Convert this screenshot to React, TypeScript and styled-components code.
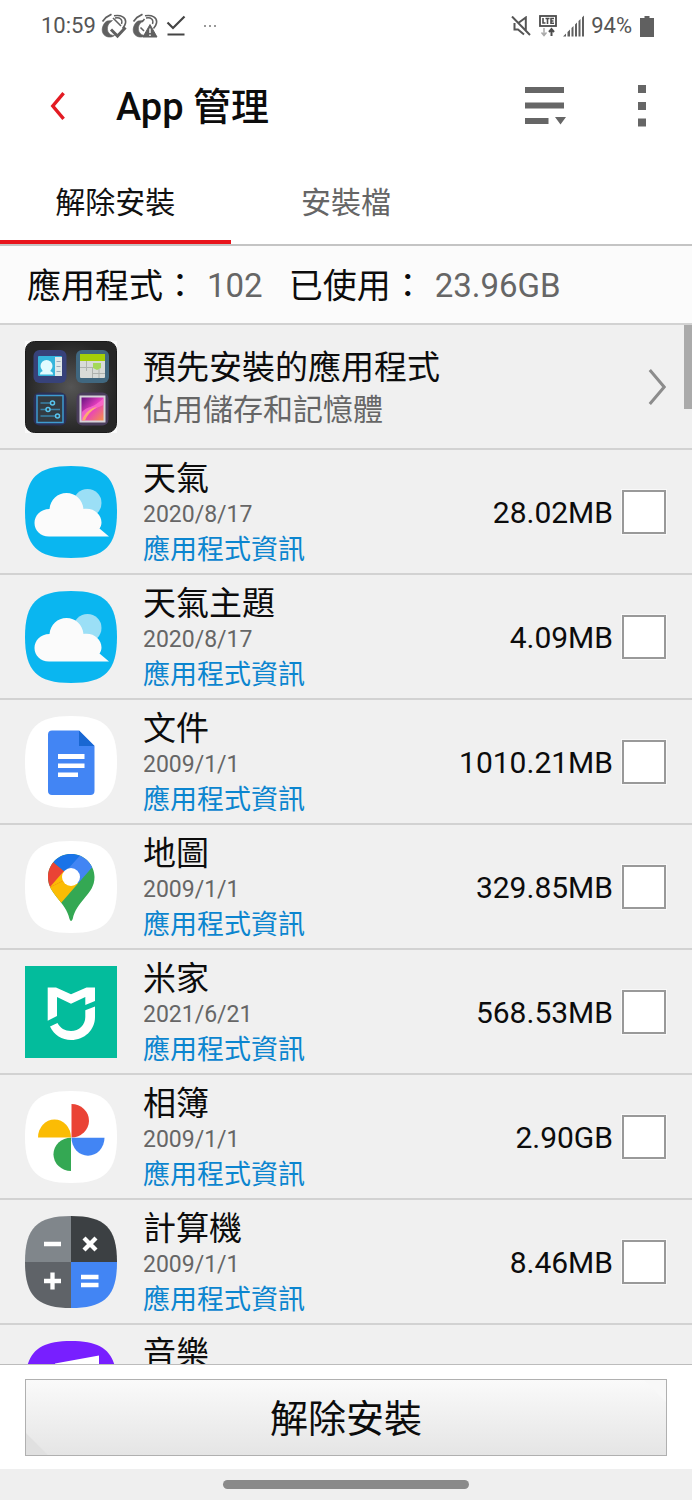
import React from "react";
import styled, { createGlobalStyle } from "styled-components";

const GlobalStyle = createGlobalStyle`
  *, *::before, *::after { box-sizing: border-box; }
  body {
    margin: 0;
    background: #fff;
    color: #0c0c0c;
    font-family: Roboto, "Noto Sans CJK TC", sans-serif;
  }
  button { font-family: inherit; color: inherit; cursor: pointer; }
  h1, h2, p, ul { margin: 0; padding: 0; }
  svg { display: block; flex: none; }
`;

const Screen = styled.div`
  display: flex;
  flex-direction: column;
  height: 100vh;
  overflow: hidden;
`;

const StatusBar = styled.div`
  flex: none;
  display: flex;
  align-items: center;
  justify-content: space-between;
  height: 52px;
  padding: 0 38px 0 41px;
  color: #555;
  font-size: 22px;
  line-height: 28px;
`;

const StatusGroup = styled.div<{ $gap: number }>`
  display: flex;
  align-items: center;
  gap: ${(p) => p.$gap}px;
`;

const Header = styled.header`
  flex: none;
  display: flex;
  align-items: center;
  height: 108px;
  padding: 0 30px 0 38px;
`;

const IconButton = styled.button`
  display: flex;
  align-items: center;
  justify-content: center;
  width: 40px;
  height: 56px;
  padding: 0;
  border: 0;
  background: none;
`;

const Title = styled.h1`
  flex: 1;
  padding: 2px 0 0 38px;
  font-size: 38px;
  font-weight: 500;
  line-height: 48px;
`;

const Actions = styled.div`
  display: flex;
  align-items: center;
  gap: 56px;
`;

const Tabs = styled.div`
  flex: none;
  display: grid;
  grid-template-columns: repeat(3, 1fr);
  height: 86px;
  border-bottom: 2px solid #c4c4c4;
`;

const Tab = styled.button<{ $active?: boolean }>`
  padding: 6px 0 0;
  border: 0;
  border-bottom: 4px solid ${(p) => (p.$active ? "#e8141c" : "transparent")};
  background: none;
  color: ${(p) => (p.$active ? "#111" : "#666")};
  font-size: 30px;
  line-height: 40px;
`;

const Summary = styled.div`
  flex: none;
  display: flex;
  align-items: center;
  gap: 26px;
  height: 79px;
  padding: 2px 27px 0;
  border-bottom: 2px solid #d2d2d2;
  background: #fbfbfb;
`;

const SummaryItem = styled.p`
  display: flex;
  gap: 10px;
  font-size: 34px;
  line-height: 44px;
`;

const SummaryValue = styled.span`
  color: #666;
  font-size: 33px;
`;

const ListArea = styled.main`
  position: relative;
  flex: 1;
  min-height: 0;
  background: #f0f0f0;
`;

const AppList = styled.ul`
  height: 100%;
  overflow-y: auto;
  scrollbar-width: none;
  list-style: none;
`;

const ScrollThumb = styled.div`
  position: absolute;
  top: 0;
  right: 0;
  width: 8px;
  height: 84px;
  background: #aaa;
`;

const Row = styled.li`
  display: flex;
  align-items: center;
  height: 125px;
  padding: 0 26px 0 25px;
  border-bottom: 2px solid #d2d2d2;
`;

const RowText = styled.div<{ $top?: boolean }>`
  flex: 1;
  min-width: 0;
  align-self: ${(p) => (p.$top ? "flex-start" : "center")};
  padding: ${(p) => (p.$top ? "8px" : "4px")} 0 0 26px;
`;

const AppName = styled.h2`
  font-size: 33px;
  font-weight: 400;
  line-height: 42px;
`;

const AppNote = styled.p`
  color: #666;
  font-size: 30px;
  line-height: 42px;
`;

const AppDate = styled.p`
  color: #666;
  font-size: 23px;
  line-height: 30px;
`;

const InfoLink = styled.a`
  display: block;
  width: max-content;
  color: #0b85cf;
  font-size: 27px;
  line-height: 40px;
  text-decoration: none;
`;

const SizeLabel = styled.label`
  display: flex;
  align-items: center;
  gap: 9px;
`;

const SizeText = styled.span`
  padding-top: 2px;
  font-size: 30px;
  line-height: 40px;
`;

const Check = styled.input`
  appearance: none;
  flex: none;
  width: 44px;
  height: 44px;
  margin: 0;
  border: 2px solid #999;
  outline: 1px solid #f9f9f9;
  background: #fff;
  &:checked { background: #e8141c; }
`;

const Footer = styled.footer`
  flex: none;
  padding: 14px 25px 13px;
  border-top: 1px solid #bcbcbc;
  background: #fff;
`;

const PrimaryButton = styled.button`
  display: block;
  width: 100%;
  height: 77px;
  padding: 2px 0 0;
  border: 1px solid #b0b0b0;
  background:
    linear-gradient(45deg, #e0e0e0 0 15px, transparent 16px),
    linear-gradient(225deg, #f8f8f8 0 15px, transparent 16px),
    linear-gradient(#fafafa, #e5e5e5);
  font-size: 38px;
  line-height: 48px;
`;

const GestureBar = styled.div`
  flex: none;
  display: flex;
  align-items: center;
  justify-content: center;
  height: 31px;
  background: #efefef;
`;

const GesturePill = styled.span`
  width: 246px;
  height: 9px;
  border-radius: 5px;
  background: #8a8a8a;
`;

const SQUIRCLE = "M46 0C80 0 92 12 92 46S80 92 46 92 0 80 0 46 12 0 46 0Z";

const SyncIcon = ({ alert }: { alert?: boolean }) => (
  <svg width="26" height="26" viewBox="0 0 26 26" fill="none" stroke="#606060">
    <path d="M1.500 8.500L5 4.500L10.500 1.200" strokeWidth="1.800" />
    <path d="M13 2.800C20 1.500 25.500 4.500 24.500 10C24 12.500 23 14 21.500 15.500" strokeWidth="1.600" />
    <path d="M14 5C19 4 22 6.500 20.500 11" strokeWidth="1.400" />
    <path d="M4 9.500C-.500 15 .500 22 6 23.700C9 24.600 11.500 24 13.500 22.500C7 22.500 4.500 16 8 10.500L11.500 7.500L6 8Z" fill="#606060" strokeWidth=".6" />
    {alert ? (
      <>
        <path d="M8.500 14.500L12 18M12.500 6L10 9" strokeWidth="1.600" />
        <path d="M18 11.500L25 24H11Z" fill="#606060" strokeWidth="1" />
        <path d="M18 15.500V20M18 21.400V23" stroke="#fff" strokeWidth="1.400" />
      </>
    ) : (
      <>
        <path d="M12 5L20 13" strokeWidth="1.600" />
        <path d="M10 16.500L16.500 23L24.500 14.500" strokeWidth="3" />
      </>
    )}
  </svg>
);

const DoneIcon = () => (
  <svg width="20" height="22" viewBox="0 0 20 22" fill="none" stroke="#444" strokeWidth="2.200">
    <path d="M1.500 7.500L7 13L18.500 1.500M1.500 19.500H18.500" />
  </svg>
);

const MoreDots = () => (
  <svg width="12" height="4" viewBox="0 0 12 4" fill="#999">
    <path d="M0 1h2v2H0zM5 1h2v2H5zM10 1h2v2h-2z" />
  </svg>
);

const MuteIcon = () => (
  <svg width="20" height="20" viewBox="0 0 20 20" fill="none" stroke="#555" strokeWidth="2">
    <path d="M1 .5L19 19M3.500 7V13.500H7L13 18.500M8 6.500L14.800 1.500V14" />
  </svg>
);

const LteIcon = () => (
  <svg width="18" height="22" viewBox="0 0 18 22" fill="none" stroke="#4c4c4c">
    <rect x="1" y="1" width="16" height="10" strokeWidth="1.800" />
    <path d="M4 3V8H6.500M6.500 3.500H10.500M8.500 3.500V9M15 3.500H12V8.300H15M12 6H14.500" strokeWidth="1.600" />
    <path d="M5 13V20M2.500 17.500L5 20.500L7.500 17.500" stroke="#aaa" strokeWidth="1.500" />
    <path d="M12.500 21V14.500M10 17L12.500 14L15 17" strokeWidth="2" />
  </svg>
);

const SignalIcon = () => (
  <svg width="22" height="22" viewBox="0 0 22 22" fill="#606060">
    <path d="M0 21.500L3 18.500V21.500ZM4.500 17L7 14.500V21.500H4.500ZM8.500 13L10.500 11V21.500H8.500ZM12 9.500L14 7.500V21.500H12ZM15.500 6L17.500 4V21.500H15.500ZM19 2.500L21 .5V21.500H19Z" />
  </svg>
);

const BatteryIcon = () => (
  <svg width="14" height="21" viewBox="0 0 14 21" fill="#606060">
    <path d="M4.500 0H9.500V2H14V21H0V2H4.500Z" />
  </svg>
);

const BackIcon = () => (
  <svg width="16" height="28" viewBox="0 0 16 28" fill="none" stroke="#e31b23" strokeWidth="3.400">
    <path d="M13.600 1.200L2.800 14L13.600 26.800" />
  </svg>
);

const SortIcon = () => (
  <svg width="42" height="38" viewBox="0 0 42 38" fill="#666">
    <path d="M0 0H39V6H0ZM0 15.500H39V21.500H0ZM0 31H23.500V37H0ZM30 30H41L35.500 37.500Z" />
  </svg>
);

const KebabIcon = () => (
  <svg width="8" height="42" viewBox="0 0 8 42" fill="#666">
    <path d="M0 0H8V8H0ZM0 17H8V25H0ZM0 33.500H8V41.500H0Z" />
  </svg>
);

const NextIcon = () => (
  <svg width="18" height="36" viewBox="0 0 18 36" fill="none" stroke="#8c8c8c" strokeWidth="3">
    <path d="M1.800 1L16.200 18L1.800 35" />
  </svg>
);

const Tile = ({ children }: { children: React.ReactNode }) => (
  <svg width="92" height="92" viewBox="0 0 92 92" aria-hidden="true">{children}</svg>
);

const FolderArt = () => (
  <Tile>
    <defs>
      <radialGradient id="folder-bg">
        <stop offset="0" stopColor="#555" />
        <stop offset="1" stopColor="#262626" />
      </radialGradient>
      <linearGradient id="folder-photo" x1="0" y1="0" x2="1" y2="1">
        <stop offset="0" stopColor="#5a0f7a" />
        <stop offset=".5" stopColor="#e83fc0" />
        <stop offset="1" stopColor="#f79a3c" />
      </linearGradient>
    </defs>
    <rect width="92" height="92" fill="#fafafa" />
    <rect x=".5" y=".5" width="91" height="91" rx="9" fill="url(#folder-bg)" stroke="#1a1a1a" />
    <rect x="8.500" y="9" width="33" height="33" rx="6" fill="#37427a" />
    <rect x="13" y="15" width="24" height="20" rx="1" fill="#35b5dc" />
    <rect x="30" y="16" width="7" height="19" fill="#dfe8e8" />
    <path d="M31.500 20.500h4M31.500 25.500h4M31.500 30.500h4" stroke="#9ab" />
    <circle cx="21.500" cy="25" r="6" fill="#e2fbff" />
    <path d="M15 33.500C15 30.500 18 29.500 21.500 29.500S28 30.500 28 33.500Z" fill="#e2fbff" />
    <rect x="51" y="9" width="33" height="33" rx="6" fill="#40677f" />
    <rect x="55" y="13" width="25" height="24" rx="1" fill="#d8dbd8" />
    <rect x="55" y="13" width="25" height="7" fill="#a4cf08" />
    <path d="M55 26.500H67M67 32.500H80M61.500 20V30M67.500 26V37M74 28V37" stroke="#aeb2ae" />
    <path d="M68 22H76V27L72 29L68 27Z" fill="#a5d85a" />
    <rect x="8.500" y="51.500" width="33" height="33" rx="6" fill="#2b3057" />
    <rect x="12" y="54.500" width="26" height="27" fill="#333b42" stroke="#3e9bd0" strokeWidth="1.500" />
    <path d="M15.500 62H30M15.500 68.500H35M15.500 75H34" stroke="#3a82a8" strokeWidth="1.500" />
    <g fill="#333b42" stroke="#58c5ef" strokeWidth="1.500">
      <circle cx="27.500" cy="62" r="2" />
      <circle cx="23" cy="68.500" r="2" />
      <circle cx="32.500" cy="75" r="2" />
    </g>
    <rect x="51.500" y="51.500" width="32" height="33" rx="6" fill="#4a3d5c" />
    <rect x="55.500" y="55.500" width="24" height="25" fill="url(#folder-photo)" stroke="#d5d3d8" strokeWidth="2" />
    <path d="M57 71C62 65 68 68 78.500 57V64C69 68 63 70 57 79.500Z" fill="#ff70d0" opacity=".7" />
    <path d="M57 79.500C60 71 66 67 72 66C66 70 62 74 60 79.500Z" fill="#ffc25e" opacity=".8" />
  </Tile>
);

const WeatherArt = () => (
  <Tile>
    <path d={SQUIRCLE} fill="#0ab6f0" />
    <circle cx="62.500" cy="37" r="14" fill="#9bdff6" />
    <path d="M24 70.500C15.500 70.500 9.500 64.500 9.500 57S15.500 43 24.500 43C25.500 33.500 32.500 27 41.500 27S57.500 33.500 58.500 43C69 41.500 76.500 48.500 76.500 56.500C76.500 59 75.500 61 74.500 62.500L84 70.500Z" fill="#fbfbfb" />
  </Tile>
);

const DocsArt = () => (
  <Tile>
    <path d={SQUIRCLE} fill="#fff" />
    <path d="M27 14.500H54L69.500 30V75C69.500 77.500 68 79 65.500 79H27C24.500 79 23 77.500 23 75V18.500C23 16 24.500 14.500 27 14.500Z" fill="#4285f4" />
    <path d="M54 14.500L69.500 30H54Z" fill="#1967d2" />
    <path d="M33 38H59.500V43H33ZM33 47.500H59.500V52H33ZM33 56.500H53V61H33Z" fill="#fff" />
  </Tile>
);

const MapsArt = () => (
  <Tile>
    <defs>
      <clipPath id="maps-pin">
        <path d="M46 13C33 13 23 23.500 23 36C23 45 27.500 50.500 32 56.500C38 64 42.500 69 44.500 78Q46 82 47.700 78C49.500 69 54 64 60 56.500C65 50.500 69.500 45 69.500 36C69.500 23.500 59 13 46 13Z" />
      </clipPath>
    </defs>
    <path d={SQUIRCLE} fill="#fff" />
    <g clipPath="url(#maps-pin)">
      <rect x="20" y="10" width="52" height="74" fill="#34a853" />
      <path d="M36 62L53 42.500L46 36L38.500 30L18 54V66Z" fill="#fbbc04" />
      <path d="M18 12L29 21.700L46 36L24.500 46.500L18 54Z" fill="#ea4335" />
      <path d="M24.500 46.500L38.500 30.500L46 36Z" fill="#fbbc04" />
      <path d="M20 10H60L40 32L46 36L29 21.700Z" fill="#1a73e8" />
      <path d="M59 10L38.500 33L46 36L53 42.500L74 18.500V10Z" fill="#4285f4" />
    </g>
    <circle cx="46" cy="36" r="9" fill="#fff" />
  </Tile>
);

const MiHomeArt = () => (
  <Tile>
    <rect width="92" height="92" fill="#03bc9c" />
    <path d="M22.700 21.500H31L46 28.300L61.500 21.500H70V35L60.300 39V31L46 37.700L32 31V50L22.700 54.700Z" fill="#fff" />
    <path d="M70 40.500L60.300 44.300V51C60.300 59 54 65 46 65C40 65 35 62 32.500 57L25 60.500C29 69 37 74 46 74C59.500 74 70 64 70 51Z" fill="#fff" />
  </Tile>
);

const PhotosArt = () => (
  <Tile>
    <path d={SQUIRCLE} fill="#fff" />
    <path d="M46.500 13A17.500 16.700 0 0 1 46.500 46.400Z" fill="#ea4335" />
    <path d="M13 46.400A16.500 18 0 0 1 46 46.400Z" fill="#fbbc04" />
    <path d="M46.500 46.700H79.500A16.500 18 0 0 1 46.500 46.700Z" fill="#4285f4" />
    <path d="M46 46.700V80A17.500 16.600 0 0 1 46 46.700Z" fill="#34a853" />
  </Tile>
);

const CalculatorArt = () => (
  <Tile>
    <defs>
      <clipPath id="calc-shape"><path d={SQUIRCLE} /></clipPath>
    </defs>
    <g clipPath="url(#calc-shape)">
      <rect width="46" height="46" fill="#80868b" />
      <rect x="46" width="46" height="46" fill="#3c4043" />
      <rect y="46" width="46" height="46" fill="#5f6368" />
      <rect x="46" y="46" width="46" height="46" fill="#4285f4" />
    </g>
    <path d="M19 28H36M59 22L71 34M71 22L59 34M19 65H36M27.500 56.500V73.500M56 61H73.500M56 69H73.500" stroke="#fff" strokeWidth="4.300" />
  </Tile>
);

const MusicArt = () => (
  <Tile>
    <path d={SQUIRCLE} fill="#781fff" />
    <path d="M30 22.500L74 14.500V62A10 9 0 1 1 66 54V30L38 35V68A10 9 0 1 1 30 60Z" fill="#fff" />
  </Tile>
);

interface AppEntry {
  name: string;
  art: React.ReactNode;
  date?: string;
  size?: string;
}

const apps: AppEntry[] = [
  { name: "天氣", date: "2020/8/17", size: "28.02MB", art: <WeatherArt /> },
  { name: "天氣主題", date: "2020/8/17", size: "4.09MB", art: <WeatherArt /> },
  { name: "文件", date: "2009/1/1", size: "1010.21MB", art: <DocsArt /> },
  { name: "地圖", date: "2009/1/1", size: "329.85MB", art: <MapsArt /> },
  { name: "米家", date: "2021/6/21", size: "568.53MB", art: <MiHomeArt /> },
  { name: "相簿", date: "2009/1/1", size: "2.90GB", art: <PhotosArt /> },
  { name: "計算機", date: "2009/1/1", size: "8.46MB", art: <CalculatorArt /> },
  { name: "音樂", art: <MusicArt /> },
];

const AppRow = ({ app }: { app: AppEntry }) => (
  <Row>
    {app.art}
    <RowText $top>
      <AppName>{app.name}</AppName>
      {app.date && (
        <>
          <AppDate>{app.date}</AppDate>
          <InfoLink href="#info">應用程式資訊</InfoLink>
        </>
      )}
    </RowText>
    <SizeLabel>
      <SizeText>{app.size}</SizeText>
      <Check type="checkbox" />
    </SizeLabel>
  </Row>
);

export default function App() {
  return (
    <>
      <GlobalStyle />
      <Screen>
        <StatusBar>
          <StatusGroup $gap={8}>
            <StatusGroup $gap={5}>
              <span>10:59</span>
              <SyncIcon />
              <SyncIcon alert />
            </StatusGroup>
            <StatusGroup $gap={18}>
              <DoneIcon />
              <MoreDots />
            </StatusGroup>
          </StatusGroup>
          <StatusGroup $gap={8}>
            <MuteIcon />
            <StatusGroup $gap={6}>
              <LteIcon />
              <SignalIcon />
              <span>94%</span>
            </StatusGroup>
            <BatteryIcon />
          </StatusGroup>
        </StatusBar>
        <Header>
          <IconButton aria-label="返回"><BackIcon /></IconButton>
          <Title>App 管理</Title>
          <Actions>
            <IconButton aria-label="排序"><SortIcon /></IconButton>
            <IconButton aria-label="更多選項"><KebabIcon /></IconButton>
          </Actions>
        </Header>
        <Tabs role="tablist">
          <Tab role="tab" aria-selected="true" $active>解除安裝</Tab>
          <Tab role="tab" aria-selected="false">安裝檔</Tab>
        </Tabs>
        <Summary>
          <SummaryItem>應用程式：<SummaryValue>102</SummaryValue></SummaryItem>
          <SummaryItem>已使用：<SummaryValue>23.96GB</SummaryValue></SummaryItem>
        </Summary>
        <ListArea>
          <AppList>
            <Row>
              <FolderArt />
              <RowText>
                <AppName>預先安裝的應用程式</AppName>
                <AppNote>佔用儲存和記憶體</AppNote>
              </RowText>
              <NextIcon />
            </Row>
            {apps.map((app) => <AppRow key={app.name} app={app} />)}
          </AppList>
          <ScrollThumb />
        </ListArea>
        <Footer>
          <PrimaryButton>解除安裝</PrimaryButton>
        </Footer>
        <GestureBar><GesturePill /></GestureBar>
      </Screen>
    </>
  );
}
